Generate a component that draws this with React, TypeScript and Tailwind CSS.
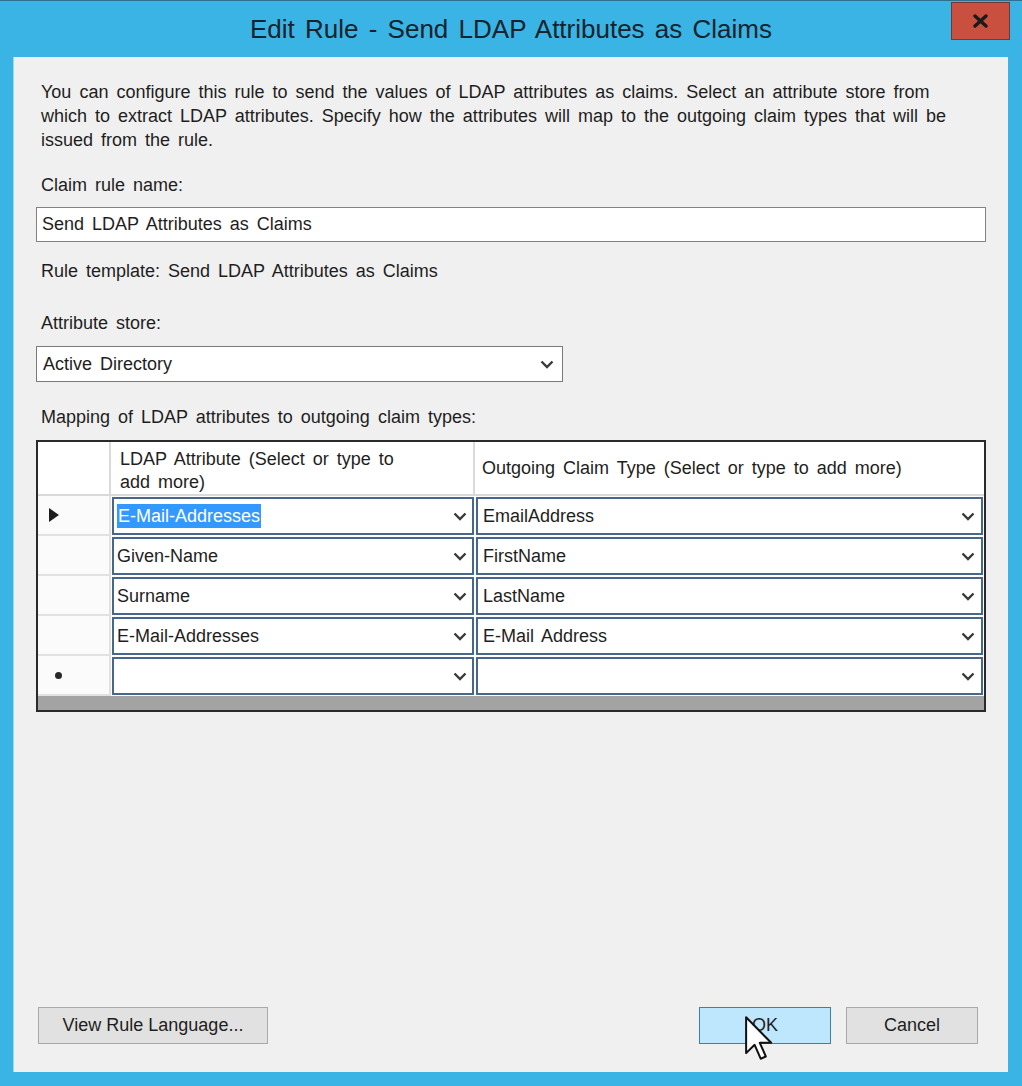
import React from "react";

const Chevron = () => (
  <svg width="14" height="9" viewBox="0 0 14 9" className="shrink-0">
    <polyline points="1.5,1.5 7,7 12.5,1.5" fill="none" stroke="#3a3a3a" strokeWidth="2.4" />
  </svg>
);

const rows = [
  { attr: "E-Mail-Addresses", claim: "EmailAddress", marker: "current", selected: true },
  { attr: "Given-Name", claim: "FirstName", marker: "" },
  { attr: "Surname", claim: "LastName", marker: "" },
  { attr: "E-Mail-Addresses", claim: "E-Mail Address", marker: "" },
  { attr: "", claim: "", marker: "new" },
];

const App = () => {
  return (
    <div className="relative w-[1022px] h-[1086px] bg-[#3ab3e5] flex flex-col overflow-hidden border-t border-[#2f6f8f] font-['Liberation_Sans',Arial,sans-serif] text-[#1e1e1e] [word-spacing:3px]">
      {/* Title bar */}
      <div className="relative h-[56px] flex items-center justify-center shrink-0">
        <span className="text-[26px] text-[#16232c]">
          Edit Rule - Send LDAP Attributes as Claims
        </span>
        <div className="absolute top-[1px] left-[951px] w-[59px] h-[38px] bg-[#c9503f] border border-[#6d3b35] flex items-center justify-center">
          <svg width="15" height="14" viewBox="0 0 15 14">
            <path d="M2 2 L13 12 M13 2 L2 12" stroke="#1a1a1a" strokeWidth="3.4" strokeLinecap="round" />
          </svg>
        </div>
      </div>

      {/* Dialog body */}
      <div className="flex-1 ml-[13px] mr-[14px] mb-[14px] bg-[#f0f0f0] border-l border-[#9fd6ef] flex flex-col px-[22px] pt-[23px] pb-[28px] text-[18px]">
        <div className="pl-[5px] leading-[24px] whitespace-nowrap">
          <div>You can configure this rule to send the values of LDAP attributes as claims. Select an attribute store from</div>
          <div>which to extract LDAP attributes. Specify how the attributes will map to the outgoing claim types that will be</div>
          <div>issued from the rule.</div>
        </div>

        <div className="pl-[5px] leading-[24px] mt-[21px]">Claim rule name:</div>
        <div className="mt-[10px] h-[35px] bg-white border border-[#828282] flex items-center px-[5px]">
          Send LDAP Attributes as Claims
        </div>

        <div className="pl-[5px] leading-[24px] mt-[17px]">Rule template: Send LDAP Attributes as Claims</div>

        <div className="pl-[5px] leading-[24px] mt-[28px]">Attribute store:</div>
        <div className="mt-[11px] h-[36px] w-[527px] bg-white border border-[#7a7a7a] flex items-center justify-between pl-[6px] pr-[8px]">
          <span>Active Directory</span>
          <Chevron />
        </div>

        <div className="pl-[5px] leading-[24px] mt-[23px]">Mapping of LDAP attributes to outgoing claim types:</div>

        {/* Grid */}
        <div className="mt-[11px] h-[272px] border-2 border-[#2a2a2a] bg-[#a3a3a3] flex flex-col">
          <div className="flex h-[54px] bg-white shrink-0">
            <div className="w-[73px] border-r-2 border-b-2 border-[#dadada]" />
            <div className="w-[364px] border-r-2 border-b-2 border-[#dadada] pl-[9px] pt-[6px] leading-[23px] flex flex-col items-start">
              <span className="whitespace-nowrap">LDAP Attribute (Select or type to</span>
              <span className="whitespace-nowrap">add more)</span>
            </div>
            <div className="flex-1 border-b-2 border-[#dadada] pl-[7px] flex items-center whitespace-nowrap">
              Outgoing Claim Type (Select or type to add more)
            </div>
          </div>

          {rows.map((row, i) => (
            <div key={i} className="flex h-[40px] bg-white shrink-0">
              <div className="w-[73px] border-r-2 border-b-2 border-[#e2e2e2] bg-[#fbfbfb] flex items-center">
                {row.marker === "current" && (
                  <svg width="10" height="14" viewBox="0 0 10 14" className="ml-[11px]">
                    <polygon points="0,0 10,7 0,14" fill="#1e1e1e" />
                  </svg>
                )}
                {row.marker === "new" && (
                  <div className="ml-[17px] w-[7px] h-[7px] rounded-full bg-[#2a2a2a]" />
                )}
              </div>
              <div className="w-[364px] p-[1px]">
                <div className="h-full border-2 border-[#47688a] bg-white flex items-center justify-between pl-[3px] pr-[5px]">
                  {row.selected ? (
                    <span className="bg-[#3399ff] text-white px-[1px] leading-[24px]">{row.attr}</span>
                  ) : (
                    <span>{row.attr}</span>
                  )}
                  <Chevron />
                </div>
              </div>
              <div className="flex-1 p-[1px]">
                <div className="h-full border-2 border-[#47688a] bg-white flex items-center justify-between pl-[5px] pr-[6px]">
                  <span>{row.claim}</span>
                  <Chevron />
                </div>
              </div>
            </div>
          ))}
        </div>

        <div className="flex-1" />

        {/* Buttons */}
        <div className="flex items-center h-[37px] pl-[2px] pr-[8px]">
          <button className="h-full w-[230px] bg-[#e1e1e1] border border-[#a9a9a9] text-[18px] text-[#1e1e1e]">
            View Rule Language...
          </button>
          <div className="flex-1" />
          <button className="h-full w-[132px] bg-[#bee6fd] border border-[#3c7fb1] text-[18px] text-[#1e1e1e]">
            OK
          </button>
          <button className="ml-[15px] h-full w-[132px] bg-[#e1e1e1] border border-[#a9a9a9] text-[18px] text-[#1e1e1e]">
            Cancel
          </button>
        </div>
      </div>

      {/* Mouse pointer */}
      <svg
        width="28"
        height="44"
        viewBox="0 0 12.5 19.5"
        className="absolute left-[745px] top-[1015px]"
      >
        <path
          d="M0.5 0.5 L0.5 16.5 L4.3 12.8 L7 19 L9.3 18 L6.6 11.9 L11.7 11.9 Z"
          fill="#ffffff"
          stroke="#111111"
          strokeWidth="0.9"
          strokeLinejoin="round"
        />
      </svg>
    </div>
  );
};

export default App;
